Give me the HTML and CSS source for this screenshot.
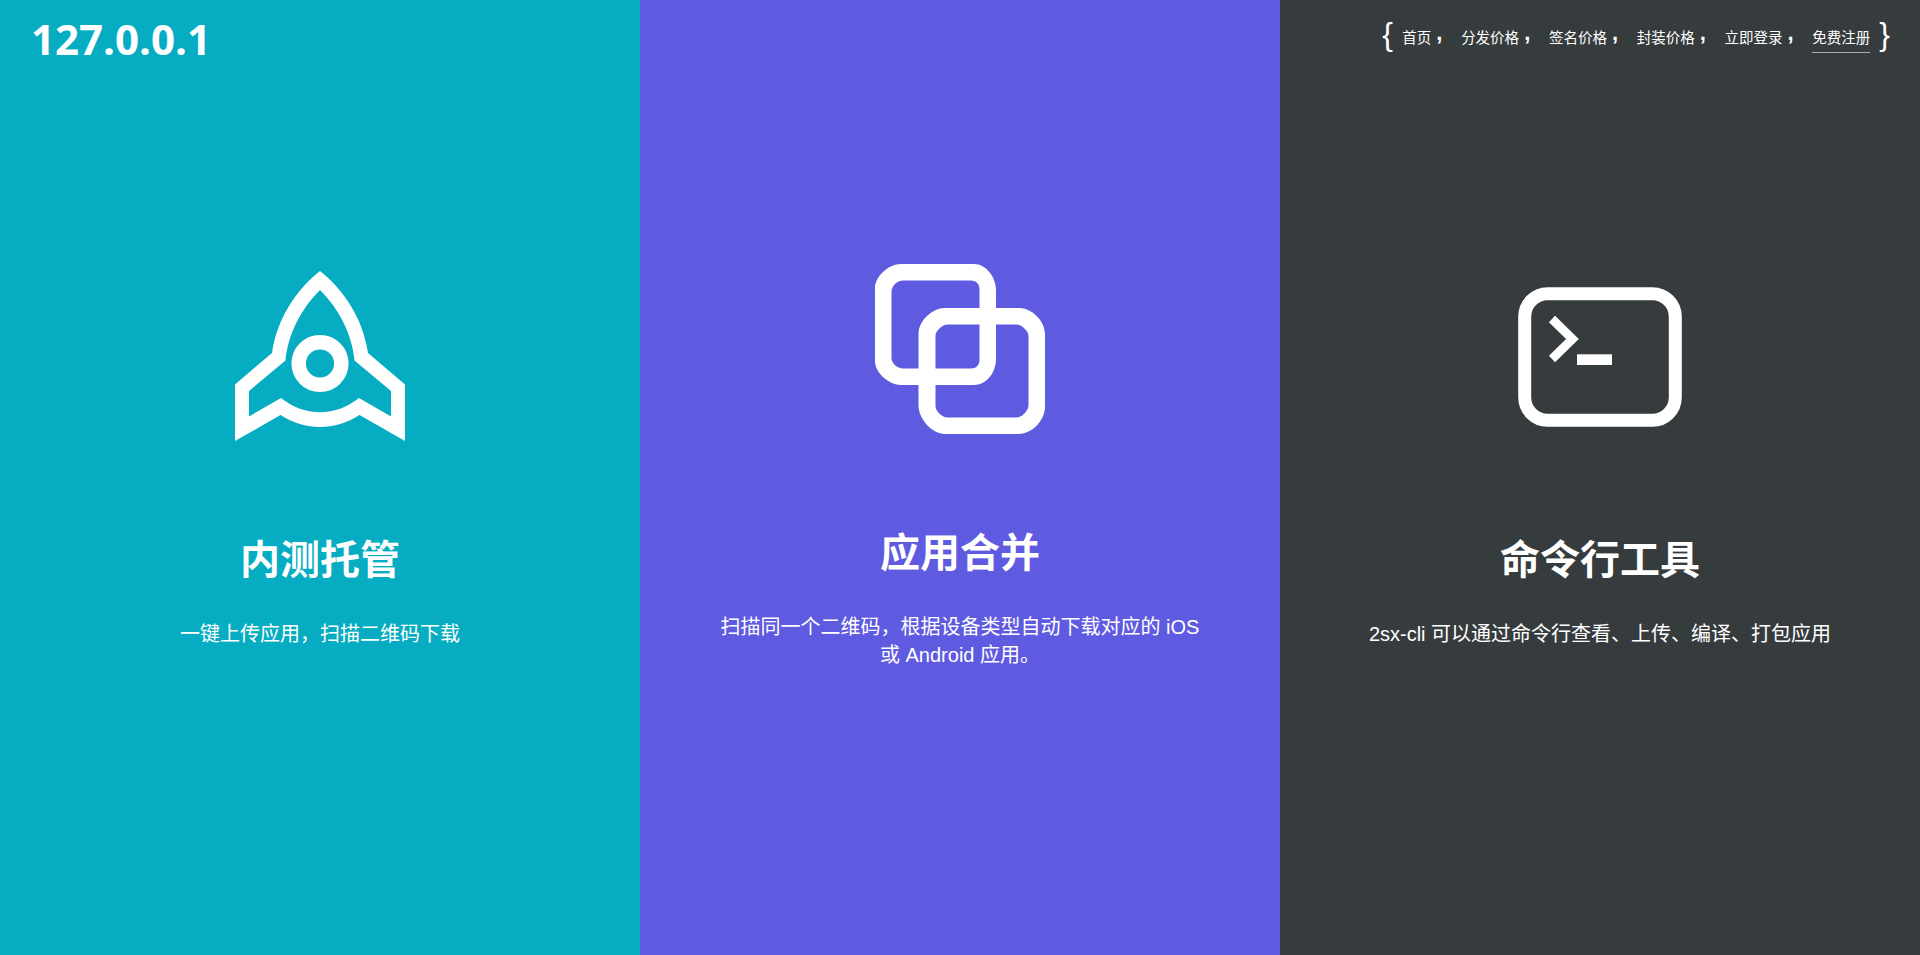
FILE: index.html
```html
<!DOCTYPE html>
<html lang="zh-CN">
<head>
    <meta charset="UTF-8">
    <title>127.0.0.1</title>
    <link rel="stylesheet" href="styles.css">
</head>
<body>
<div class="header">
    <a class="logo" href="#">127.0.0.1</a>
    <div class="nav">
        <span class="brace">{</span>
        <ul class="menu">
            <li><a href="#">首页</a><b>,</b></li>
            <li><a href="#">分发价格</a><b>,</b></li>
            <li><a href="#">签名价格</a><b>,</b></li>
            <li><a href="#">封装价格</a><b>,</b></li>
            <li><a href="#">立即登录</a><b>,</b></li>
            <li><a class="signup" href="#">免费注册</a></li>
        </ul>
        <span class="brace">}</span>
    </div>
</div>

<div class="section">
    <div class="col teal">
        <svg class="icon" viewBox="0 0 170 170">
            <path fill="#fff" fill-rule="evenodd" d="M85 0C108 18 128 47 133 82L170 113.500V170L124.500 144C100 160 70 160 45.500 144L0 170V113.500L37 82C42 47 62 18 85 0zM85 19C66 38 53 63 50.500 89.500L14 120V145.500L46 127C70 146 100 146 124 127L156 145.500V120L119.500 89.500C117 63 104 38 85 19z"/>
            <circle cx="85" cy="92.500" r="21.300" fill="none" stroke="#fff" stroke-width="14.500"/>
        </svg>
        <h2>内测托管</h2>
        <p>一键上传应用，扫描二维码下载</p>
    </div>
    <div class="col purple">
        <svg class="icon" viewBox="0 0 170 170">
            <path fill="#fff" fill-rule="evenodd" d="M26 0H99C111 0 121 13 121 26V95C121 109 111 121 99 121H26C14 121 0 109 0 97V24C0 13 13 0 26 0zM28 16.500C22 16.500 16.500 22 16.500 28V94C16.500 99 22 104.500 28 104.500H96C101 104.500 104.500 101 104.500 96V25C104.500 20 101 16.500 96 16.500z"/>
            <path fill="#fff" fill-rule="evenodd" d="M70 44H144C157 44 170 57 170 70V143C170 156 157 170 144 170H70C57 170 43.500 155 43.500 141V70C43.500 57 57 44 70 44zM73 60.500C67 60.500 60.500 67 60.500 72V142C60.500 147 67 153.500 73 153.500H141C147 153.500 153.500 147 153.500 141V72C153.500 67 147 60.500 141 60.500z"/>
        </svg>
        <h2>应用合并</h2>
        <p>扫描同一个二维码，根据设备类型自动下载对应的 iOS 或 Android 应用。</p>
    </div>
    <div class="col dark">
        <svg class="icon" viewBox="0 0 170 170">
            <rect x="9.700" y="22.700" width="150.600" height="126.600" rx="23" fill="none" stroke="#fff" stroke-width="13"/>
            <path d="M37 48L57.500 68L37 88" fill="none" stroke="#fff" stroke-width="8.800"/>
            <rect x="62" y="83.300" width="35" height="10.700" fill="#fff"/>
        </svg>
        <h2>命令行工具</h2>
        <p>2sx-cli 可以通过命令行查看、上传、编译、打包应用</p>
    </div>
</div>
</body>
</html>
```
FILE: styles.css
```css
* {
    margin: 0;
    padding: 0;
    box-sizing: border-box;
}

body {
    font-family: "Liberation Sans", "Noto Sans CJK SC", sans-serif;
    color: #fff;
    overflow: hidden;
}

a {
    color: #fff;
    text-decoration: none;
}

/* header floats over the three columns */
.header {
    position: absolute;
    top: 0;
    left: 0;
    width: 100%;
    padding: 0 30px 0 31px;
    display: flex;
    justify-content: space-between;
}

.logo {
    font: bold 42px/78px "Open Sans", sans-serif;
}

.nav {
    display: flex;
    padding-top: 18px;
}

.brace {
    font-size: 32px;
    line-height: 33px;
}

.menu {
    display: flex;
    list-style: none;
    margin: 0 9px 0 9.500px;
    font-size: 14.500px;
    line-height: 40px;
}

.menu li {
    display: flex;
}

.menu b {
    width: 29.800px;
    padding-left: 5px;
    font-size: 22px;
    line-height: 29px;
}

.signup {
    height: 35px;
    border-bottom: 1px solid #a9abad;
}

.section {
    display: flex;
    height: 955px;
}

.col {
    flex: 1;
    padding: 271px 75px 0;
    text-align: center;
}

.teal {
    background: #06acc1;
}

.purple {
    background: #5f5be1;
    padding-top: 264px;
}

.dark {
    background: #363b3d;
}

.icon {
    display: block;
    width: 170px;
    height: 170px;
    margin: 0 auto;
}

.col h2 {
    margin-top: 91px;
    font-size: 40px;
    line-height: 56px;
}

.col p {
    margin-top: 32px;
    font-size: 20px;
    line-height: 28px;
}
```
